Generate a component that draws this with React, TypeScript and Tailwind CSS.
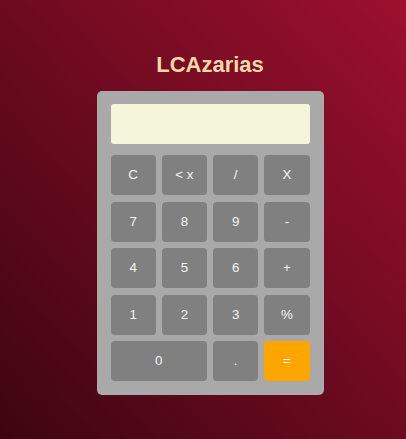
const keys = [
  { label: "C" },
  { label: "< x" },
  { label: "/" },
  { label: "X" },
  { label: "7" },
  { label: "8" },
  { label: "9" },
  { label: "-" },
  { label: "4" },
  { label: "5" },
  { label: "6" },
  { label: "+" },
  { label: "1" },
  { label: "2" },
  { label: "3" },
  { label: "%" },
];

const App = () => {
  return (
    <main className="min-h-[439px] bg-[linear-gradient(to_top_right,#3d0511,#9c102e)] flex flex-col items-center pt-[52px] pl-[14px] font-['Liberation_Sans',Arial,sans-serif]">
      <h1 className="text-[22px] leading-[25px] font-bold text-[#f5d9a8]">LCAzarias</h1>

      <div className="mt-[14px] w-[227px] bg-[#a9a9a9] rounded-[5px] p-[14px] pt-[13px] pb-[14px]">
        <div className="h-10 bg-[#f5f5dc] rounded-[3px]" />

        <div className="mt-[11px] grid grid-cols-4 gap-x-[6px] gap-y-[6.5px]">
          {keys.map((k) => (
            <button
              key={k.label}
              className="h-10 bg-[#808080] rounded text-[13.33px] text-[#f4f4f4]"
            >
              {k.label}
            </button>
          ))}
          <button className="col-span-2 h-10 bg-[#808080] rounded text-[13.33px] text-[#f4f4f4]">0</button>
          <button className="h-10 bg-[#808080] rounded text-[13.33px] text-[#f4f4f4]">.</button>
          <button className="h-10 bg-[#ffa500] rounded text-[13.33px] text-white">=</button>
        </div>
      </div>
    </main>
  );
};

export default App;
